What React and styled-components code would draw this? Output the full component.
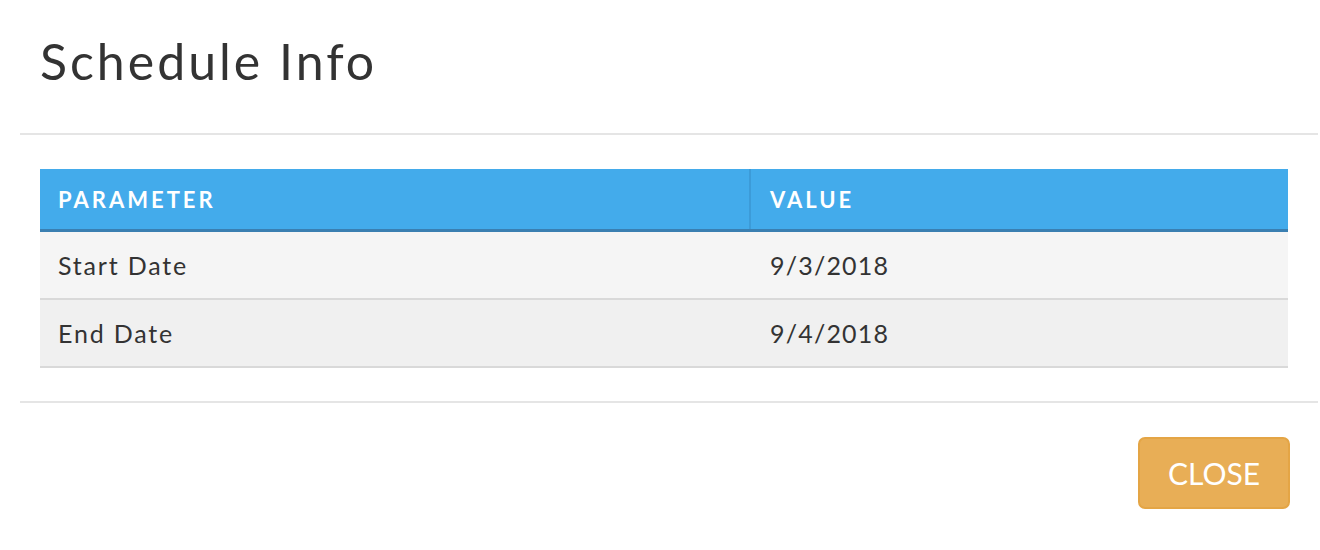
import styled, { createGlobalStyle } from "styled-components";

const GlobalStyle = createGlobalStyle`
    body {
        margin: 0;
        background: #ffffff;
        font-family: Lato, "Liberation Sans", sans-serif;
        color: #333333;
    }
`;

const rows = [
    { name: "Start Date", value: "9/3/2018" },
    { name: "End Date", value: "9/4/2018" },
];

export default function App() {
    return (
        <>
            <GlobalStyle />
            <Modal>
                <Header>
                    <Title>Schedule Info</Title>
                </Header>
                <Body>
                    <Table>
                        <colgroup>
                            <col style={{ width: 710 }} />
                            <col />
                        </colgroup>
                        <thead>
                            <tr>
                                <Th>PARAMETER</Th>
                                <Th>VALUE</Th>
                            </tr>
                        </thead>
                        <tbody>
                            {rows.map((row, i) => (
                                <Row key={row.name} $odd={i % 2 === 1}>
                                    <Td>{row.name}</Td>
                                    <Td>{row.value}</Td>
                                </Row>
                            ))}
                        </tbody>
                    </Table>
                </Body>
                <Footer>
                    <CloseButton>CLOSE</CloseButton>
                </Footer>
            </Modal>
        </>
    );
}

const Modal = styled.div`
    margin-left: 20px;
    width: 1298px;
`;
const Header = styled.div`
    padding: 31px 20px 42px;
    border-bottom: 2px solid #e5e5e5;
`;
const Title = styled.h1`
    margin: 0;
    font-size: 50px;
    font-weight: 400;
    letter-spacing: 3px;
    line-height: 60px;
    color: #333333;
`;
const Body = styled.div`
    padding: 34px 30px 33px 20px;
    border-bottom: 2px solid #e5e5e5;
`;
const Table = styled.table`
    width: 1248px;
    border-collapse: collapse;
    table-layout: fixed;
`;
const Th = styled.th`
    height: 60px;
    padding: 0 18px;
    background: #43abeb;
    color: #ffffff;
    font-size: 22px;
    font-weight: 700;
    letter-spacing: 3px;
    text-align: left;
    border-bottom: 3px solid #3a7fb1;
    & + & {
        border-left: 2px solid #3c9bd8;
        padding-left: 19px;
    }
`;
const Row = styled.tr`
    background: ${(p) => (p.$odd ? "#f0f0f0" : "#f5f5f5")};
    border-bottom: 2px solid #d9d9d9;
`;
const Td = styled.td`
    height: 66px;
    padding: 0 18px;
    font-size: 25px;
    letter-spacing: 1.8px;
    color: #333333;
    & + & {
        padding-left: 20px;
        letter-spacing: 1.2px;
    }
`;
const Footer = styled.div`
    display: flex;
    justify-content: flex-end;
    padding: 34px 28px 20px 20px;
`;
const CloseButton = styled.button`
    width: 152px;
    height: 72px;
    background: #e8ae56;
    border: 2px solid #e4a545;
    border-radius: 7px;
    color: #ffffff;
    font-family: Lato, "Liberation Sans", sans-serif;
    font-size: 30px;
    font-weight: 400;
    cursor: pointer;
`;
